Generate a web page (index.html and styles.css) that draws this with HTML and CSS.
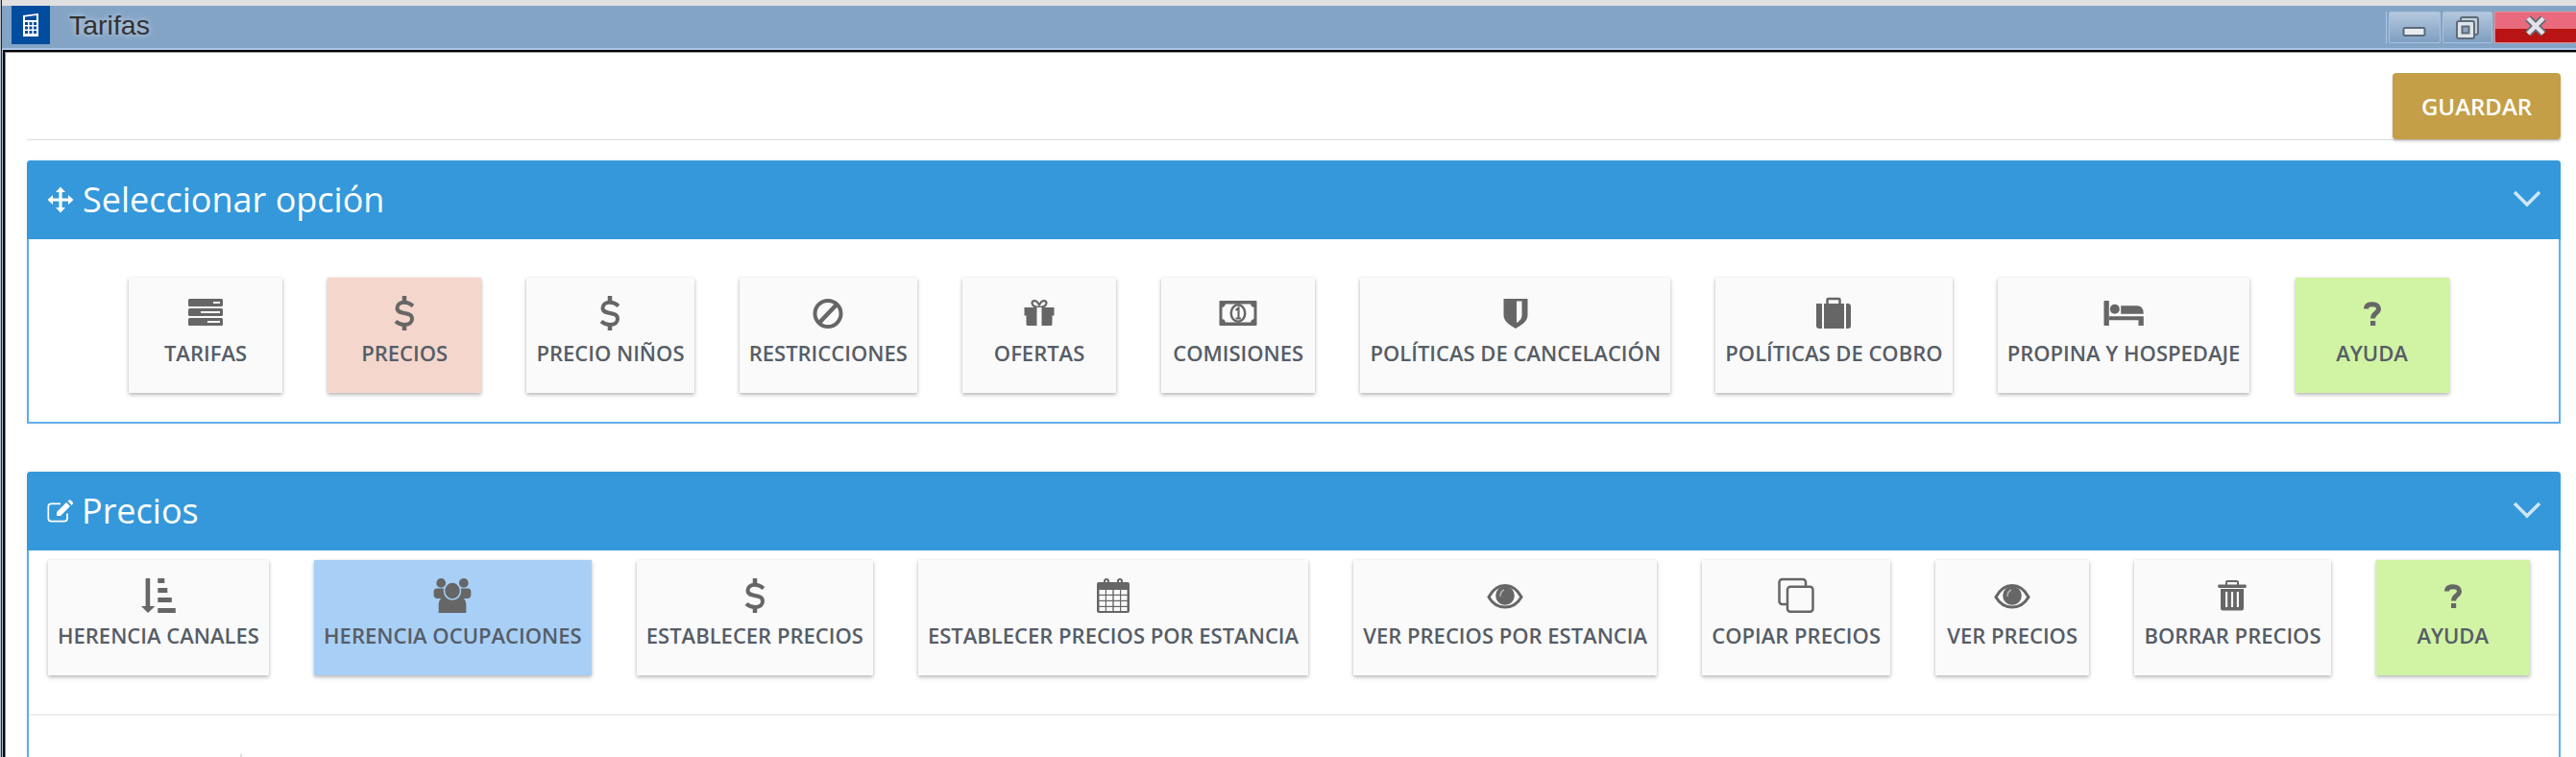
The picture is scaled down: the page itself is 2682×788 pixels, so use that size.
FILE: index.html
```html
<!DOCTYPE html>
<html lang="es">
<head>
<meta charset="utf-8">
<title>Tarifas</title>
<link rel="stylesheet" href="styles.css">
</head>
<body>
<div class="screen">
  <div class="screen-inner">
    <div class="top-gap"></div>
    <header class="titlebar">
      <div class="app-icon">
        <svg width="18" height="26" viewBox="0 0 18 26"><path d="M1 3 17 1V25H1Z" fill="#fff"/><path d="M3 4.500 15 3V8H3Z" fill="#004c9e"/><g fill="#004c9e"><rect x="3" y="10" width="3" height="3"/><rect x="7.500" y="10" width="3" height="3"/><rect x="12" y="10" width="3" height="3"/><rect x="3" y="14.500" width="3" height="3"/><rect x="7.500" y="14.500" width="3" height="3"/><rect x="12" y="14.500" width="3" height="3"/><rect x="3" y="19" width="3" height="3"/><rect x="7.500" y="19" width="3" height="3"/><rect x="12" y="19" width="3" height="3"/></g></svg>
      </div>
      <span class="window-title">Tarifas</span>
      <div class="win-btns">
        <div class="win-btn win-min"><svg width="26" height="12" viewBox="0 0 26 12"><rect x="1.500" y="2" width="22" height="8" rx="1.500" fill="#e8ecf0" stroke="#5b6a7c" stroke-width="2"/></svg></div>
        <div class="win-btn win-max"><svg width="26" height="26" viewBox="0 0 26 26"><rect x="6" y="2" width="18" height="18" rx="2" fill="#c3d0de" stroke="#5f6b79" stroke-width="2"/><rect x="2" y="6" width="18" height="18" rx="2" fill="#dde4ea" stroke="#5f6b79" stroke-width="2"/><rect x="7.500" y="11.500" width="7" height="7" fill="#8ba6c4" stroke="#5f6b79" stroke-width="2"/></svg></div>
        <div class="win-btn win-close"><svg width="24" height="22" viewBox="0 0 24 22"><path d="M4 3 20 19M20 3 4 19" stroke="#5f6b79" stroke-width="8"/><path d="M4 3 20 19M20 3 4 19" stroke="#e3e3e6" stroke-width="4.500"/></svg></div>
      </div>
    </header>
    <div class="frame">
      <div class="client">
        <main class="page">
          <div class="toolbar"><button class="save-btn">GUARDAR</button></div>

          <section class="panel panel-options">
            <div class="panel-head">
              <svg class="head-icon" width="28" height="28" viewBox="0 0 28 28"><path fill="#fff" d="M14 0.500 19 6H15.600V12.400H22V9L27.500 14 22 19V15.600H15.600V22H19L14 27.500 9 22H12.400V15.600H6V19L0.500 14 6 9V12.400H12.400V6H9Z"/></svg>
              <h2 class="panel-title">Seleccionar opción</h2>
              <svg class="chevron" width="30" height="18" viewBox="0 0 30 18"><path d="M2 2 15 15 28 2" fill="none" stroke="#cfe6f7" stroke-width="3.500"/></svg>
            </div>
            <div class="btn-row row-options">
              <a class="tile"><svg class="ico" viewBox="0 0 44 36"><g fill="#666"><rect x="4" y="3" width="36" height="8" rx="1.500"/><rect x="4" y="13" width="36" height="8" rx="1.500"/><rect x="4" y="23" width="36" height="8" rx="1.500"/></g><g fill="#fafafa"><rect x="30" y="6" width="7" height="2"/><rect x="17" y="16" width="20" height="2"/><rect x="24" y="26" width="13" height="2"/></g></svg><span class="tile-label">TARIFAS</span></a>
              <a class="tile tile-rose"><svg class="ico" viewBox="0 0 44 36"><use href="#i-dollar"/></svg><span class="tile-label">PRECIOS</span></a>
              <a class="tile"><svg class="ico" viewBox="0 0 44 36"><use href="#i-dollar"/></svg><span class="tile-label">PRECIO NIÑOS</span></a>
              <a class="tile"><svg class="ico" viewBox="0 0 44 36"><circle cx="22" cy="18.500" r="13.500" fill="none" stroke="#666" stroke-width="4"/><path d="M13 28 31 9" stroke="#666" stroke-width="4.500"/></svg><span class="tile-label">RESTRICCIONES</span></a>
              <a class="tile"><svg class="ico" viewBox="0 0 44 36"><path d="M22 12C18 12 14.500 10 14.500 7.500 14.500 5 18 4 20 6.500L22 9.500 24 6.500C26 4 29.500 5 29.500 7.500 29.500 10 26 12 22 12Z" fill="none" stroke="#666" stroke-width="2.200"/><path fill="#666" d="M6.500 12H37.500V20.500H35.500V29.500Q35.500 31 34 31H10Q8.500 31 8.500 29.500V20.500H6.500Z"/><rect x="19.500" y="12" width="5" height="19" fill="#fafafa"/></svg><span class="tile-label">OFERTAS</span></a>
              <a class="tile"><svg class="ico" viewBox="0 0 44 36"><rect x="2.500" y="5" width="39" height="26" rx="1" fill="#666"/><path fill="#fafafa" d="M9 8.500H35C35.500 10.500 36.500 11.500 38.500 12V24C36.500 24.500 35.500 25.500 35 27.500H9C8.500 25.500 7.500 24.500 5.500 24V12C7.500 11.500 8.500 10.500 9 8.500Z"/><ellipse cx="22" cy="18" rx="8.500" ry="10" fill="#666"/><ellipse cx="22" cy="18" rx="6" ry="7.500" fill="#fafafa"/><path d="M19.500 15 22.500 12.500V23.500M19.500 23.500H25" fill="none" stroke="#666" stroke-width="2.200"/></svg><span class="tile-label">COMISIONES</span></a>
              <a class="tile"><svg class="ico" viewBox="0 0 44 36"><path fill="#666" d="M9.500 3H34.500V20C34.500 27 27 31 22 34 17 31 9.500 27 9.500 20Z"/><path fill="#fafafa" d="M23 5.500H28.500V20C28.500 24 25.500 26.500 23 28Z"/></svg><span class="tile-label">POLÍTICAS DE CANCELACIÓN</span></a>
              <a class="tile"><svg class="ico" viewBox="0 0 44 36"><path d="M15.500 9V4Q15.500 3 16.500 3H27.500Q28.500 3 28.500 4V9" fill="none" stroke="#666" stroke-width="2.500"/><path fill="#666" d="M10 8H4Q4 8 4 8.500V31Q4 34 7 34H10ZM12 8H33V34H12ZM35 8H37Q40 8 40 11V31Q40 34 37 34H35Z"/></svg><span class="tile-label">POLÍTICAS DE COBRO</span></a>
              <a class="tile"><svg class="ico" viewBox="0 0 44 36"><g fill="#666"><path d="M1.500 6Q1.500 5 2.500 5H6.800V31H1.500Z"/><circle cx="12.800" cy="13.700" r="5"/><path d="M19.200 10.300H36Q42.800 10.500 42.800 18.700H19.200Z"/><path d="M6.800 21.300H42.800V31H37.500V25.300H6.800Z"/></g></svg><span class="tile-label">PROPINA Y HOSPEDAJE</span></a>
              <a class="tile tile-green"><svg class="ico" viewBox="0 0 44 36"><use href="#i-question"/></svg><span class="tile-label">AYUDA</span></a>
            </div>
          </section>

          <section class="panel panel-prices">
            <div class="panel-head">
              <svg class="head-icon" width="28" height="24" viewBox="0 0 28 24"><path d="M21 14.500V19.500Q21 22.700 18 22.700H4.500Q1.300 22.700 1.300 19.500V7.500Q1.300 4.300 4.500 4.300H14" fill="none" stroke="#fff" stroke-width="1.700"/><path fill="#fff" d="M10 13 20 3 24 7 14 17H10ZM21.500 1.500 23 0.500Q24 0 25 1L26.500 2.500Q27.500 3.500 26.800 4.600L25.500 6Z"/></svg>
              <h2 class="panel-title">Precios</h2>
              <svg class="chevron" width="30" height="18" viewBox="0 0 30 18"><path d="M2 2 15 15 28 2" fill="none" stroke="#cfe6f7" stroke-width="3.500"/></svg>
            </div>
            <div class="btn-row row-prices">
              <a class="tile"><svg class="ico" viewBox="0 0 44 36"><g fill="#666"><rect x="8.600" y="0" width="4.600" height="30"/><path d="M4 29H18.500L11 36Z"/><rect x="21.300" y="0" width="7" height="5"/><rect x="21.300" y="10" width="10" height="5"/><rect x="21.300" y="20" width="14.500" height="5"/><rect x="21.300" y="31" width="18.500" height="5"/></g></svg><span class="tile-label">HERENCIA CANALES</span></a>
              <a class="tile tile-blue"><svg class="ico" viewBox="0 0 44 36"><g fill="#666"><circle cx="10.200" cy="4.900" r="4.900"/><circle cx="33.800" cy="4.900" r="4.900"/><path d="M2.600 14Q2.600 10.500 6 10.500H14Q17.500 10.500 17.500 14V21H5.500Q2.600 20 2.600 17Z"/><path d="M41.400 14Q41.400 10.500 38 10.500H30Q26.500 10.500 26.500 14V21H38.500Q41.400 20 41.400 17Z"/><path d="M7.700 36V27Q7.700 21 13 20H31Q36.300 21 36.300 27V36Z"/></g><ellipse cx="22" cy="13" rx="8.500" ry="9" fill="#666" stroke="#a8cff5" stroke-width="1.500"/></svg><span class="tile-label">HERENCIA OCUPACIONES</span></a>
              <a class="tile"><svg class="ico" viewBox="0 0 44 36"><use href="#i-dollar"/></svg><span class="tile-label">ESTABLECER PRECIOS</span></a>
              <a class="tile"><svg class="ico" viewBox="0 0 44 36"><rect x="5" y="4" width="34" height="32" rx="2" fill="#666"/><g fill="#fafafa"><rect x="7.500" y="12" width="6.300" height="4.800"/><rect x="15" y="12" width="6.300" height="4.800"/><rect x="22.700" y="12" width="6.300" height="4.800"/><rect x="30.200" y="12" width="6.300" height="4.800"/><rect x="7.500" y="18" width="6.300" height="4.800"/><rect x="15" y="18" width="6.300" height="4.800"/><rect x="22.700" y="18" width="6.300" height="4.800"/><rect x="30.200" y="18" width="6.300" height="4.800"/><rect x="7.500" y="24" width="6.300" height="4.800"/><rect x="15" y="24" width="6.300" height="4.800"/><rect x="22.700" y="24" width="6.300" height="4.800"/><rect x="30.200" y="24" width="6.300" height="4.800"/><rect x="7.500" y="30" width="6.300" height="4"/><rect x="15" y="30" width="6.300" height="4"/><rect x="22.700" y="30" width="6.300" height="4"/><rect x="30.200" y="30" width="6.300" height="4"/></g><path d="M13 9V3Q13 1 15 1 17 1 17 3V9M27 9V3Q27 1 29 1 31 1 31 3V9" fill="none" stroke="#666" stroke-width="2"/></svg><span class="tile-label">ESTABLECER PRECIOS POR ESTANCIA</span></a>
              <a class="tile"><svg class="ico" viewBox="0 0 44 36"><use href="#i-eye"/></svg><span class="tile-label">VER PRECIOS POR ESTANCIA</span></a>
              <a class="tile"><svg class="ico" viewBox="0 0 44 36"><rect x="4.500" y="1" width="27.500" height="26" rx="3" fill="none" stroke="#666" stroke-width="2.500"/><rect x="13" y="8.700" width="26.500" height="26" rx="3" fill="#fafafa" stroke="#666" stroke-width="2.500"/></svg><span class="tile-label">COPIAR PRECIOS</span></a>
              <a class="tile"><svg class="ico" viewBox="0 0 44 36"><use href="#i-eye"/></svg><span class="tile-label">VER PRECIOS</span></a>
              <a class="tile"><svg class="ico" viewBox="0 0 44 36"><path d="M16 7V4Q16 3 17 3H27Q28 3 28 4V7" fill="none" stroke="#666" stroke-width="2"/><rect x="7.300" y="6.500" width="29.400" height="3.500" rx="1" fill="#666"/><path fill="#666" d="M10 11H34V31Q34 33.500 31.500 33.500H12.500Q10 33.500 10 31Z"/><g fill="#fafafa"><rect x="15" y="14" width="2.200" height="16"/><rect x="20.900" y="14" width="2.200" height="16"/><rect x="26.800" y="14" width="2.200" height="16"/></g></svg><span class="tile-label">BORRAR PRECIOS</span></a>
              <a class="tile tile-green"><svg class="ico" viewBox="0 0 44 36"><use href="#i-question"/></svg><span class="tile-label">AYUDA</span></a>
            </div>
            <div class="panel-rest"><div class="tick"></div></div>
          </section>
        </main>
      </div>
    </div>
  </div>
</div>
<svg class="defs" width="0" height="0">
  <defs>
    <g id="i-dollar" fill="none" stroke="#666"><path d="M31 10.500C28 8 25.500 6.800 22 6.800 17 6.800 14.500 9.300 14.500 12.600 14.500 21 30 15 30 24 30 27.500 27 30 22 30 18.500 30 15.500 28.800 13 26.500" stroke-width="4"/><path d="M22 0V6M22 30V36" stroke-width="4.500"/></g>
    <g id="i-question"><path d="M15.500 13.500C15.500 9.500 18.500 8.800 22 8.800 26 8.800 28.500 10.500 28.500 13.500 28.500 18 22.500 17.500 22.500 23.500" fill="none" stroke="#666" stroke-width="5"/><rect x="20" y="26" width="5.200" height="5" fill="#666"/></g>
    <g id="i-eye"><path d="M5 19.500C9 12 15 7.500 22 7.500 29 7.500 35 12 39 19.500 35 26.500 29 30 22 30 15 30 9 26.500 5 19.500Z" fill="#fafafa" stroke="#666" stroke-width="3"/><circle cx="22" cy="18" r="9.800" fill="#666"/><path d="M17 19C17 15.500 18.500 13 21 12" fill="none" stroke="#b5b5b5" stroke-width="1.500"/></g>
  </defs>
</svg>
</body>
</html>
```
FILE: styles.css
```css
* { box-sizing: border-box; }
html, body { margin: 0; padding: 0; height: 788px; overflow: hidden; background: #fff; }
body { font-family: "Open Sans", "Liberation Sans", sans-serif; }

.screen { height: 788px; border-left: 1px solid #b9bdc2; overflow: hidden; }
.screen-inner { height: 100%; border-left: 1px solid #222; display: flex; flex-direction: column; }
.top-gap { height: 6px; background: #e0e0e0; flex: none; }

.titlebar { height: 44px; flex: none; background: #84a4c6; display: flex; align-items: flex-start; padding-left: 10px; }
.app-icon { width: 40px; height: 40px; background: #004c9e; display: flex; align-items: center; justify-content: center; flex: none; }
.window-title { margin-left: 20px; margin-top: 4px; font-family: "Liberation Sans", Arial, sans-serif; font-size: 28.500px; line-height: 32px; color: #333; text-shadow: 0 0 6px rgba(225, 235, 245, .85); }

.win-btns { margin-left: auto; margin-top: 6px; display: flex; gap: 2px; height: 33px; padding-left: 2px; border-left: 1px solid #a9c4e6; }
.win-btn { height: 33px; display: flex; align-items: center; justify-content: center; border: 1px solid #a9c1dc; border-radius: 2px; }
.win-min, .win-max { background: linear-gradient(#b4c7dc, #7f9fc2); }
.win-min { width: 54px; padding-top: 8px; }
.win-max { width: 52px; }
.win-close { width: 85px; background: linear-gradient(#e86a7c 0, #e86a7c 54%, #b81414 54%, #b81414 100%); border-color: #e88; border-right: 0; align-items: flex-start; }
.win-close svg { margin-top: 3px; }

.frame { flex: 1; min-height: 0; background: #a9c4e6; padding: 2px 0 0 1px; }
.client { height: 100%; border-top: 2px solid #000; border-left: 2px solid #000; }
.page { height: 100%; background: #fff; border-top: 1px solid #999; border-left: 1px solid #888; padding: 0 16px 0 22px; }

.toolbar { height: 91px; padding-top: 21px; display: flex; justify-content: flex-end; border-bottom: 1px solid #ddd; margin-bottom: 21px; }
.save-btn { width: 175px; height: 69px; border: 0; border-radius: 4px; background: #c49f47; color: #fff; font: 600 24px "Open Sans", sans-serif; box-shadow: 0 2px 3px rgba(0, 0, 0, .2); padding: 0; }

.panel { border: 2px solid #62aeea; border-top: 0; border-radius: 4px 4px 0 0; background: #fff; box-shadow: 0 0 5px rgba(0, 0, 0, .07); }
.panel-options { height: 274px; margin-bottom: 50px; }
.panel-prices { border-bottom: 0; }
.panel-prices .panel-title { margin-left: 8px; }
.panel-head { height: 82px; margin: 0 -2px; background: #3498db; border-radius: 4px 4px 0 0; display: flex; align-items: center; padding: 0 20px 0 21px; color: #fff; }
.head-icon { flex: none; }
.panel-title { margin: 0 0 0 9px; font-size: 36px; font-weight: 400; line-height: 46px; color: #fff; flex: 1; }
.chevron { flex: none; margin-top: -2px; }

.btn-row { display: flex; gap: 47.200px; }
.row-options { padding: 40px 0 0 104px; }
.row-prices { padding: 10px 0 40px 20px; border-bottom: 2px solid #eee; }

.tile { flex: none; min-width: 160px; height: 120px; padding: 19px 10px 0; background: #fafafa; box-shadow: 0 2px 4px rgba(0, 0, 0, .28), 0 0 2px rgba(0, 0, 0, .06); display: flex; flex-direction: column; align-items: center; color: #565d67; }
.tile-rose { background: #f5d6cc; }
.tile-green { background: #d1f3a4; }
.tile-blue { background: #a8cff5; }
.ico { width: 44px; height: 36px; flex: none; display: block; overflow: visible; }
.tile-label { margin-top: 11px; font-size: 22px; font-weight: 600; line-height: 24px; white-space: nowrap; }

.panel-rest { padding: 40px 0 0 220px; }
.tick { width: 2px; height: 3px; background: #ddd; }
.defs { position: absolute; }
```
